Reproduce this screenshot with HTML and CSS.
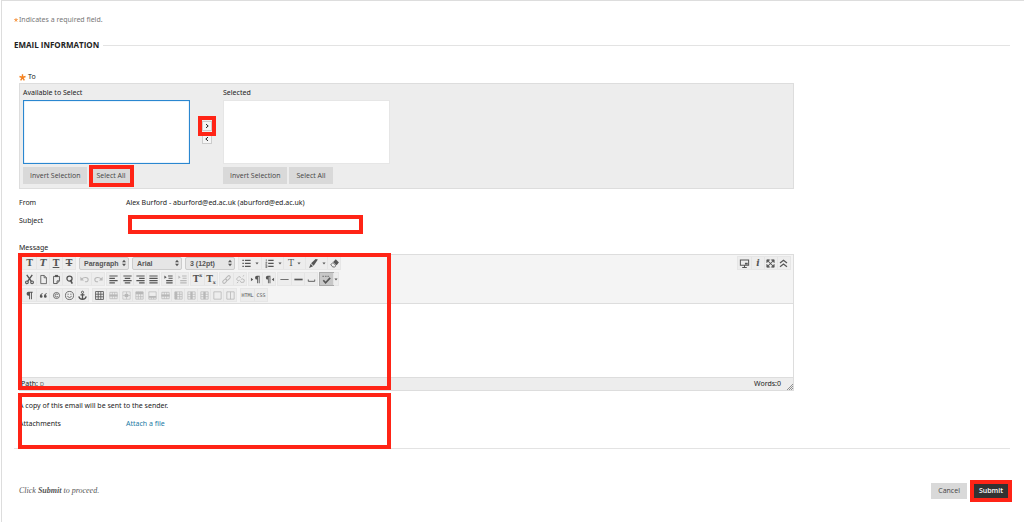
FILE: index.html
```html
<!DOCTYPE html>
<html lang="en">
<head>
    <meta charset="UTF-8">
    <meta name="viewport" content="width=device-width, initial-scale=1.0">
    <title>Send Email</title>
    <link rel="stylesheet" href="styles.css">
</head>
<body>
    <!-- Icon set, 12x12 grid -->
    <svg class="sprite" aria-hidden="true">
        <symbol id="star" viewBox="0 0 12 12"><path d="M6 .5v5.5M6 6L.8 4.3M6 6l5.2-1.7M6 6l-3.2 5M6 6l3.2 5" stroke="currentColor" stroke-width="2.4" fill="none"/></symbol>
        <symbol id="caret" viewBox="0 0 4 12"><path d="M.3 5h3.4L2 7.2z" fill="currentColor"/></symbol>
        <symbol id="updown" viewBox="0 0 6 12"><path d="M1 5.3h4L3 2.8zM1 6.7h4L3 9.2z" fill="currentColor"/></symbol>
        <symbol id="ul" viewBox="0 0 12 12"><path d="M1.5 2.5h1.6M1.5 5.8h1.6M1.5 9.1h1.6M4.3 2.5h6.2M4.3 5.8h6.2M4.3 9.1h6.2" stroke="currentColor" stroke-width="1.3"/></symbol>
        <symbol id="ol" viewBox="0 0 12 12"><path d="M2.5 1.4v2.4M1.6 4.8h1.6L1.8 6.8h1.6M1.6 8h1.6v2.4H1.6M1.6 9.2h1.4" fill="none" stroke="currentColor" stroke-width=".7"/><path d="M4.6 2.5h5.9M4.6 5.8h5.9M4.6 9.1h5.9" stroke="currentColor" stroke-width="1.3"/></symbol>
        <symbol id="brush" viewBox="0 0 12 12"><path d="M10.8 1.5L8.3 1 3.4 5.6l2.8 2.8zM2.9 6.4l2.6 2.6-4.3 1.9z" fill="currentColor"/></symbol>
        <symbol id="eraser" viewBox="0 0 12 12"><path d="M7.4 1.4L10.8 5 8.2 7.8 4.6 4.4z" fill="currentColor"/><path d="M4.2 4.9l3.5 3.4-1.6 1.5H4.2L1.9 7.5z" fill="none" stroke="currentColor" stroke-width=".9"/></symbol>
        <symbol id="cut" viewBox="0 0 12 12"><path d="M3 1l5 7M9 1L4 8" stroke="currentColor" stroke-width="1.5"/><circle cx="3.2" cy="9.1" r="1.5" fill="none" stroke="currentColor" stroke-width="1.2"/><circle cx="8.8" cy="9.1" r="1.5" fill="none" stroke="currentColor" stroke-width="1.2"/></symbol>
        <symbol id="page" viewBox="0 0 12 12"><path d="M3 1.6h3.8L9.2 4v6.5H3zM6.7 1.6v2.5h2.5" fill="none" stroke="currentColor" stroke-width=".9"/></symbol>
        <symbol id="paste" viewBox="0 0 12 12"><path d="M2.8 2.6h6.4v4.9l-2.6 2.9H2.8zM9.2 7.5H6.6v2.9" fill="none" stroke="currentColor"/><path d="M4.4 1h3.2v2.4H4.4z" fill="currentColor"/></symbol>
        <symbol id="find" viewBox="0 0 12 12"><circle cx="6" cy="5" r="2.8" fill="none" stroke="currentColor" stroke-width="1.4"/><path d="M7 6.5L9 10.5" stroke="currentColor" stroke-width="1.8"/></symbol>
        <symbol id="undo" viewBox="0 0 12 12"><path d="M3 5.5C5 3 10 3.2 10 6S8 8.5 6.5 8.5" fill="none" stroke="currentColor" stroke-width="1.2"/><path d="M1.5 3v4h4z" fill="currentColor"/></symbol>
        <symbol id="redo" viewBox="0 0 12 12"><path d="M9 5.5C7 3 2 3.2 2 6s2 2.5 3.5 2.5" fill="none" stroke="currentColor" stroke-width="1.2"/><path d="M10.5 3v4h-4z" fill="currentColor"/></symbol>
        <symbol id="left" viewBox="0 0 12 12"><path d="M1.5 2.2h9M1.5 4.7h6M1.5 7.2h9M1.5 9.7h6" stroke="currentColor" stroke-width="1.3"/></symbol>
        <symbol id="center" viewBox="0 0 12 12"><path d="M1.5 2.2h9M3 4.7h6M1.5 7.2h9M3 9.7h6" stroke="currentColor" stroke-width="1.3"/></symbol>
        <symbol id="right" viewBox="0 0 12 12"><path d="M1.5 2.2h9M4.5 4.7h6M1.5 7.2h9M4.5 9.7h6" stroke="currentColor" stroke-width="1.3"/></symbol>
        <symbol id="justify" viewBox="0 0 12 12"><path d="M1.5 2.2h9M1.5 4.7h9M1.5 7.2h9M1.5 9.7h9" stroke="currentColor" stroke-width="1.3"/></symbol>
        <symbol id="indent" viewBox="0 0 12 12"><path d="M5.5 2.2h5M6 4.7h4.5M3.5 7.2h7M3.5 9.7h7" stroke="currentColor" stroke-width="1.2"/><path d="M1.5 1.7v3.6L4 3.5z" fill="currentColor"/></symbol>
        <symbol id="link" viewBox="0 0 12 12"><g fill="none" stroke="currentColor" stroke-width="1.1" transform="rotate(-45 6 6)"><rect x=".8" y="4.5" width="5.2" height="3" rx="1.5"/><rect x="5.5" y="4.5" width="5.7" height="3" rx="1.5"/></g></symbol>
        <symbol id="unlink" viewBox="0 0 12 12"><path d="M6.5 4L4.3 2.6 1.6 5.5l1.8 2 1.8-.8M6.3 6.3l1.4-1.2 2.5 1.3-.6 2.6-3 .2-.8-1.5M2 9.8l1.5-1M8.5 2.5l1.5-1" fill="none" stroke="currentColor"/></symbol>
        <symbol id="ltr" viewBox="0 0 12 12"><path d="M1 4v4l2.5-2z" fill="currentColor"/><path d="M10.5 2h-3a2 2 0 000 4h.3v4h.9V3h.8v7h1z" fill="currentColor"/></symbol>
        <symbol id="rtl" viewBox="0 0 12 12"><path d="M11 4v4L8.5 6z" fill="currentColor"/><path d="M7 2H4a2 2 0 000 4h.3v4h.9V3H6v7h1z" fill="currentColor"/></symbol>
        <symbol id="thin" viewBox="0 0 12 12"><path d="M1.5 6h9" stroke="currentColor" stroke-width=".9"/></symbol>
        <symbol id="thick" viewBox="0 0 12 12"><path d="M1.5 6h9" stroke="currentColor" stroke-width="1.8"/></symbol>
        <symbol id="space" viewBox="0 0 12 12"><path d="M2.5 6v2h7V6" fill="none" stroke="currentColor"/></symbol>
        <symbol id="spell" viewBox="0 0 12 12"><path d="M2.5 6.8l2.5 2.7L10 4.3" fill="none" stroke="currentColor" stroke-width="1.8"/><path d="M1.5 2.5h1.8M4.3 2.5h1.8M7 2.5h1.8" stroke="currentColor" stroke-width="1.3" opacity=".6"/></symbol>
        <symbol id="pilcrow" viewBox="0 0 12 12"><path d="M9.5 2H5a2.2 2.2 0 000 4.4h.6V10h1V3h1v7h1V3h.9z" fill="currentColor"/></symbol>
        <symbol id="quote" viewBox="0 0 12 12"><path d="M5.3 3.5Q2 4 2 7a1.5 1.5 0 101.7-1.5Q4 4.5 5.3 4.2zM9.8 3.5Q6.5 4 6.5 7a1.5 1.5 0 101.7-1.5Q8.5 4.5 9.8 4.2z" fill="currentColor"/></symbol>
        <symbol id="copyright" viewBox="0 0 12 12"><circle cx="6" cy="6" r="3.3" fill="none" stroke="currentColor" stroke-width=".9"/><path d="M7.4 5a1.6 1.6 0 100 2" fill="none" stroke="currentColor" stroke-width=".9"/></symbol>
        <symbol id="smile" viewBox="0 0 12 12"><circle cx="6" cy="6" r="4.4" fill="none" stroke="currentColor" stroke-width=".9"/><path d="M3.6 6.8q2.4 3 4.8 0M4.5 4v1.3M7.5 4v1.3" fill="none" stroke="currentColor" stroke-width=".9"/></symbol>
        <symbol id="anchor" viewBox="0 0 12 12"><circle cx="6" cy="2.5" r="1.2" fill="none" stroke="currentColor"/><path d="M6 3.7V10M3.8 5.3h4.4M2 7q.5 3 4 3.2Q9.5 10 10 7" fill="none" stroke="currentColor" stroke-width="1.4"/></symbol>
        <symbol id="table" viewBox="0 0 12 12"><path d="M1.7 1.7h8.6v8.6H1.7zM1.7 4.6h8.6M1.7 7.4h8.6M4.6 1.7v8.6M7.4 1.7v8.6" fill="none" stroke="currentColor" stroke-width=".9"/></symbol>
        <symbol id="rows" viewBox="0 0 12 12"><path d="M2 2.5h8v7H2zM4.7 2.5v7M7.3 2.5v7" fill="none" stroke="currentColor" stroke-width=".8"/><path d="M1.5 4.8h9v2.4h-9z" fill="currentColor"/></symbol>
        <symbol id="cell" viewBox="0 0 12 12"><path d="M2 2h8v8H2zM2 6h8M6 2v8" fill="none" stroke="currentColor" stroke-width=".7"/><path d="M4 4.2h4v3.6H4z" fill="currentColor"/></symbol>
        <symbol id="rowtop" viewBox="0 0 12 12"><path d="M2 2h8v8H2zM2 7.3h8M4.7 2v8M7.3 2v8" fill="none" stroke="currentColor" stroke-width=".8"/><path d="M2 2h8v2.7H2z" fill="currentColor"/></symbol>
        <symbol id="rowbottom" viewBox="0 0 12 12"><path d="M2 2h8v8H2zM4.7 7v3M7.3 7v3" fill="none" stroke="currentColor" stroke-width=".8"/><path d="M2 6.5h8v2H2z" fill="currentColor"/></symbol>
        <symbol id="colleft" viewBox="0 0 12 12"><path d="M2 2h8v8H2zM2 4.7h8M2 7.3h8M7.3 2v8" fill="none" stroke="currentColor" stroke-width=".8"/><path d="M2 2h2.7v8H2z" fill="currentColor"/></symbol>
        <symbol id="colmid" viewBox="0 0 12 12"><path d="M2 2h8v8H2zM2 4.7h8M2 7.3h8" fill="none" stroke="currentColor" stroke-width=".8"/><path d="M4.7 2h2.6v8H4.7z" fill="currentColor"/></symbol>
        <symbol id="merge" viewBox="0 0 12 12"><path d="M2 2h8v8H2z" fill="none" stroke="currentColor" stroke-width=".9"/></symbol>
        <symbol id="split" viewBox="0 0 12 12"><path d="M2 2h8v8H2zM6 2v8" fill="none" stroke="currentColor" stroke-width=".9"/></symbol>
        <symbol id="monitor" viewBox="0 0 12 12"><path d="M1.5 2.2h9v5.8h-9zM3.5 10.3h5M6 8v2" fill="none" stroke="currentColor" stroke-width="1.1"/><path d="M6.5 5.2h3v2h-3z" fill="currentColor"/></symbol>
        <symbol id="expand" viewBox="0 0 12 12"><path d="M3 3l6 6M9 3L3 9" stroke="currentColor" stroke-width="1.1"/><path d="M2 2h3L2 5zM10 2v3L7 2zM2 10V7l3 3zM10 10H7l3-3z" fill="currentColor" stroke="currentColor" stroke-width=".8"/></symbol>
        <symbol id="collapse" viewBox="0 0 12 12"><path d="M2.2 5.5L6 2.5l3.8 3M2.2 9.5L6 6.5l3.8 3" fill="none" stroke="currentColor" stroke-width="1.4"/></symbol>
        <symbol id="next" viewBox="0 0 12 12"><path d="M4.5 3.2L7.8 6 4.5 8.8" fill="none" stroke="currentColor" stroke-width="1.5"/></symbol>
        <symbol id="prev" viewBox="0 0 12 12"><path d="M7.5 3.2L4.2 6l3.3 2.8" fill="none" stroke="currentColor" stroke-width="1.5"/></symbol>
    </svg>

    <form class="page">
        <p class="required-note"><svg><use href="#star"/></svg>Indicates a required field.</p>
        <h1 class="section-title">EMAIL INFORMATION</h1>

        <div class="fields">
            <div class="to-label"><svg><use href="#star"/></svg>To</div>
            <div class="picker">
                <div class="picker-list">
                    <label for="available">Available to Select</label>
                    <select id="available" class="active" multiple></select>
                    <div class="picker-buttons">
                        <button type="button">Invert Selection</button>
                        <span class="mark"><button type="button">Select All</button></span>
                    </div>
                </div>
                <div class="movers">
                    <span class="mark"><button type="button" aria-label="Add"><svg><use href="#next"/></svg></button></span>
                    <button type="button" aria-label="Remove"><svg><use href="#prev"/></svg></button>
                </div>
                <div class="picker-list">
                    <label for="selected">Selected</label>
                    <select id="selected" multiple></select>
                    <div class="picker-buttons">
                        <button type="button">Invert Selection</button>
                        <button type="button">Select All</button>
                    </div>
                </div>
            </div>

            <div class="row">
                <span class="row-label">From</span>
                <span>Alex Burford - aburford@ed.ac.uk (aburford@ed.ac.uk)</span>
            </div>
            <div class="row">
                <label class="row-label" for="subject">Subject</label>
                <span class="mark subject"><input type="text" id="subject"></span>
            </div>

            <label class="message-label" for="message">Message</label>
            <div class="editor mark-half">
                <div class="toolbar">
                    <div class="tools">
                        <div class="tool-row formats">
                            <div class="group letters">
                                <button type="button"><b>T</b></button>
                                <button type="button"><i>T</i></button>
                                <button type="button"><u>T</u></button>
                                <button type="button"><s>T</s></button>
                            </div>
                            <span class="drop"><select aria-label="Format"><option>Paragraph</option></select><svg><use href="#updown"/></svg></span>
                            <span class="drop"><select aria-label="Font"><option>Arial</option></select><svg><use href="#updown"/></svg></span>
                            <span class="drop"><select aria-label="Size"><option>3 (12pt)</option></select><svg><use href="#updown"/></svg></span>
                            <div class="group menus">
                                <button type="button" aria-label="Bullets"><svg><use href="#ul"/></svg><svg class="caret"><use href="#caret"/></svg></button>
                                <button type="button" aria-label="Numbering"><svg><use href="#ol"/></svg><svg class="caret"><use href="#caret"/></svg></button>
                                <button type="button" class="color">T<svg class="caret"><use href="#caret"/></svg></button>
                                <button type="button" aria-label="Highlight"><svg><use href="#brush"/></svg><svg class="caret"><use href="#caret"/></svg></button>
                                <button type="button" aria-label="Clear"><svg><use href="#eraser"/></svg></button>
                            </div>
                        </div>
                        <div class="tool-row">
                            <div class="group">
                                <button type="button" aria-label="Cut"><svg><use href="#cut"/></svg></button>
                                <button type="button" aria-label="Copy"><svg><use href="#page"/></svg></button>
                                <button type="button" aria-label="Paste"><svg><use href="#paste"/></svg></button>
                                <button type="button" aria-label="Find"><svg><use href="#find"/></svg></button>
                            </div>
                            <div class="group">
                                <button type="button" disabled aria-label="Undo"><svg><use href="#undo"/></svg></button>
                                <button type="button" disabled aria-label="Redo"><svg><use href="#redo"/></svg></button>
                            </div>
                            <div class="group">
                                <button type="button" aria-label="Align left"><svg><use href="#left"/></svg></button>
                                <button type="button" aria-label="Align center"><svg><use href="#center"/></svg></button>
                                <button type="button" aria-label="Align right"><svg><use href="#right"/></svg></button>
                                <button type="button" aria-label="Justify"><svg><use href="#justify"/></svg></button>
                            </div>
                            <div class="group">
                                <button type="button" aria-label="Indent"><svg><use href="#indent"/></svg></button>
                                <button type="button" disabled aria-label="Outdent"><svg><use href="#indent"/></svg></button>
                            </div>
                            <div class="group letters script">
                                <button type="button"><b>T</b><sup>x</sup></button>
                                <button type="button"><b>T</b><sub>x</sub></button>
                            </div>
                            <div class="group">
                                <button type="button" disabled aria-label="Link"><svg><use href="#link"/></svg></button>
                                <button type="button" disabled aria-label="Unlink"><svg><use href="#unlink"/></svg></button>
                            </div>
                            <div class="group">
                                <button type="button" aria-label="Left to right"><svg><use href="#ltr"/></svg></button>
                                <button type="button" aria-label="Right to left"><svg><use href="#rtl"/></svg></button>
                            </div>
                            <div class="group">
                                <button type="button" aria-label="Line"><svg><use href="#thin"/></svg></button>
                                <button type="button" aria-label="Rule"><svg><use href="#thick"/></svg></button>
                                <button type="button" aria-label="Space"><svg><use href="#space"/></svg></button>
                            </div>
                            <div class="group">
                                <button type="button" class="pressed" aria-label="Spelling"><svg><use href="#spell"/></svg></button>
                                <button type="button" class="narrow" aria-label="Languages"><svg class="caret"><use href="#caret"/></svg></button>
                            </div>
                        </div>
                        <div class="tool-row tables">
                            <div class="group">
                                <button type="button" aria-label="Paragraph marks"><svg><use href="#pilcrow"/></svg></button>
                                <button type="button" aria-label="Quote"><svg><use href="#quote"/></svg></button>
                                <button type="button" aria-label="Symbol"><svg><use href="#copyright"/></svg></button>
                                <button type="button" aria-label="Emoticon"><svg><use href="#smile"/></svg></button>
                                <button type="button" aria-label="Anchor"><svg><use href="#anchor"/></svg></button>
                            </div>
                            <div class="group">
                                <button type="button" aria-label="Table"><svg><use href="#table"/></svg></button>
                                <button type="button" disabled aria-label="Row properties"><svg><use href="#rows"/></svg></button>
                                <button type="button" disabled aria-label="Cell properties"><svg><use href="#cell"/></svg></button>
                                <button type="button" disabled aria-label="Row before"><svg><use href="#rowtop"/></svg></button>
                                <button type="button" disabled aria-label="Row after"><svg><use href="#rowbottom"/></svg></button>
                                <button type="button" disabled aria-label="Delete row"><svg><use href="#rows"/></svg></button>
                                <button type="button" disabled aria-label="Column before"><svg><use href="#colleft"/></svg></button>
                                <button type="button" disabled aria-label="Column after"><svg><use href="#colmid"/></svg></button>
                                <button type="button" disabled aria-label="Delete column"><svg><use href="#colmid"/></svg></button>
                                <button type="button" disabled aria-label="Merge cells"><svg><use href="#merge"/></svg></button>
                                <button type="button" disabled aria-label="Split cells"><svg><use href="#split"/></svg></button>
                            </div>
                            <div class="group code">
                                <button type="button">HTML</button>
                                <button type="button">CSS</button>
                            </div>
                        </div>
                    </div>
                    <div class="group">
                        <button type="button" aria-label="Preview"><svg><use href="#monitor"/></svg></button>
                        <button type="button" class="info"><i>i</i></button>
                        <button type="button" aria-label="Full screen"><svg><use href="#expand"/></svg></button>
                        <button type="button" aria-label="Collapse"><svg><use href="#collapse"/></svg></button>
                    </div>
                </div>
                <textarea id="message"></textarea>
                <div class="status">
                    <span>Path: <span class="path">p</span></span>
                    <span>Words:0</span>
                    <svg class="grip" viewBox="0 0 6 6"><path d="M0 6l6-6M2 6l4-4M4 6l2-2" stroke="#777" stroke-width=".8"/></svg>
                </div>
            </div>

            <div class="extras mark-half">
                <p>A copy of this email will be sent to the sender.</p>
                <div class="row">
                    <span class="row-label">Attachments</span>
                    <a href="#">Attach a file</a>
                </div>
            </div>
        </div>

        <div class="footer">
            <p>Click <b>Submit</b> to proceed.</p>
            <div class="actions">
                <button type="button">Cancel</button>
                <span class="mark"><button type="submit" class="submit">Submit</button></span>
            </div>
        </div>
    </form>
</body>
</html>
```
FILE: styles.css
```css
*, *::after {
    box-sizing: border-box;
    margin: 0;
    padding: 0;
}

body {
    background: white;
    color: #222;
    font-family: "Noto Sans", "Open Sans", sans-serif;
    font-size: 7px;
    line-height: 10px;
}

button, input, select, textarea {
    font: inherit;
    color: inherit;
    border: none;
    border-radius: 0;
    outline: none;
}

svg {
    display: block;
    width: 12px;
    height: 12px;
}

.sprite {
    display: none;
}

.page {
    min-height: 100vh;
    margin-left: 1px;
    padding: 14px 14px 20px 12px;
    border-top: 1px solid #ddd;
    border-left: 1px solid #ddd;
}

.required-note {
    display: flex;
    align-items: center;
    gap: 1px;
    color: #777;
}

.required-note svg {
    width: 4px;
    height: 4px;
    color: #f58220;
}

.section-title {
    display: flex;
    align-items: center;
    gap: 4px;
    margin-top: 15px;
    font: bold 8px/10px "Open Sans", sans-serif;
}

.section-title::after {
    content: "";
    flex: 1;
    border-top: 1px solid #e3e3e3;
}

.fields {
    padding: 22px 0 0 5px;
    border-bottom: 1px solid #e3e3e3;
}

.to-label {
    display: flex;
    align-items: center;
    gap: 2px;
    margin-bottom: 1px;
}

.to-label svg {
    width: 7px;
    height: 7px;
    color: #f58220;
}

/* Red callout frames */
.mark, .mark-half {
    position: relative;
    display: block;
}

.mark::after, .mark-half::after {
    content: "";
    position: absolute;
    inset: -3px;
    border: 4px solid #ff2416;
    pointer-events: none;
}

.mark-half::after {
    inset: -1px auto -1px -1px;
    width: 373px;
}

.editor.mark-half::after {
    inset: -2px auto 0 -2px;
}

.picker, .editor {
    width: calc(78% + 2px);
}

.picker {
    display: flex;
    margin-bottom: 9px;
    padding: 4px 3px;
    background: #ededed;
    border: 1px solid #ddd;
}

.picker-list {
    width: 167px;
}

.picker-list select {
    display: block;
    width: 100%;
    height: 64px;
    margin: 2px 0 3px;
    background: white;
    border: 1px solid #e6e6e6;
}

.picker-list .active {
    border-color: #2a87d0;
    box-shadow: inset 0 0 1px #2a87d0;
}

.picker-buttons {
    display: flex;
    gap: 2px;
}

.picker-buttons button, .actions button {
    display: block;
    height: 17px;
    padding: 0 7px;
    background: #d9d9d9;
    color: #444;
    font-family: "Open Sans", sans-serif;
}

.picker-buttons .mark::after {
    inset: -2px -1px -3px 0;
}

.movers {
    display: flex;
    flex-direction: column;
    align-items: center;
    gap: 3px;
    width: 33px;
    padding-top: 33px;
}

.movers button {
    display: block;
    width: 10px;
    height: 10px;
    background: #f5f5f5;
    border: 1px solid #ccc;
}

.movers svg {
    width: 8px;
    height: 8px;
}

.movers .mark::after {
    inset: -5px -4px -5px;
}

.row {
    display: flex;
    margin-top: 8px;
}

.row-label {
    width: 107px;
}

.subject {
    width: 229px;
    height: 13px;
    margin: 2px 0 0 5px;
}

.subject input {
    display: block;
    width: 100%;
    height: 13px;
}

.message-label {
    display: block;
    margin: 12px 0 1px;
}

.toolbar {
    display: flex;
    justify-content: space-between;
    align-items: flex-start;
    padding: 1px 2px;
    background: #f4f4f4;
    border-bottom: 1px solid #ddd;
}

.editor {
    border: 1px solid #ddd;
}

.tools {
    display: flex;
    flex-direction: column;
    gap: 2px;
}

.tool-row {
    display: flex;
    align-items: center;
    gap: 1px;
}

.formats, .tables {
    gap: 3px;
}

.group {
    display: flex;
    background: #ededed;
    border: 1px solid #e6e6e6;
    color: #555;
}

.group button {
    display: flex;
    align-items: center;
    justify-content: center;
    min-width: 13px;
    height: 12px;
    background: none;
}

.group button + button {
    border-left: 1px solid #e4e4e4;
}

.group svg {
    width: 11px;
    height: 11px;
    flex: none;
}

.group button:disabled {
    color: #b8b8b8;
}

.group svg.caret {
    width: 4px;
}

.group .narrow {
    min-width: 5px;
}

.group .pressed {
    background: #c8c8c8;
    box-shadow: 0 0 0 1px #aaa;
}

.letters, .group .color {
    font: bold 9px/12px "DejaVu Serif", serif;
}

.group .color {
    font-weight: normal;
}

.script button {
    width: 13px;
}

.script sup, .script sub {
    font-size: 5px;
    line-height: 5px;
}

.script sup {
    align-self: flex-start;
}

.script sub {
    align-self: flex-end;
}

.menus button {
    width: 22px;
    gap: 3px;
}

.menus button:last-child {
    width: 13px;
}

.drop {
    position: relative;
    width: 50px;
}

.drop select {
    display: block;
    appearance: none;
    width: 100%;
    height: 13px;
    padding: 0 4px;
    background: #e6e6e6;
    border: 1px solid #ccc;
    border-radius: 2px;
    font: bold 7px/11px "Liberation Sans", sans-serif;
    color: #555;
}

.drop svg {
    position: absolute;
    top: 0;
    right: 2px;
    width: 6px;
    color: #555;
    pointer-events: none;
}

.code {
    font: 5px/12px "DejaVu Sans Mono", monospace;
}

.info {
    font: bold 9px/12px "DejaVu Serif", serif;
}

.editor textarea {
    display: block;
    width: 100%;
    height: 73px;
    resize: none;
}

.status {
    display: flex;
    align-items: center;
    gap: 6px;
    height: 13px;
    padding-left: 1px;
    background: #ededed;
    border-top: 1px solid #ddd;
}

.status > :first-child {
    flex: 1;
}

.path {
    color: #777;
}

.grip {
    align-self: flex-end;
    width: 6px;
    height: 6px;
}

.extras {
    margin-top: 3px;
    padding: 7px 0 19px;
}

a {
    color: #1a7aa5;
    text-decoration: none;
}

.footer {
    display: flex;
    align-items: center;
    justify-content: space-between;
    margin-top: 34px;
    padding-left: 5px;
}

.footer p {
    font: italic 8px/10px "Liberation Serif", serif;
    color: #555;
}

.actions {
    display: flex;
    gap: 5px;
}

.actions button {
    height: 16px;
}

.actions .mark::after {
    inset: -3px -2px;
}

.actions .submit {
    background: #333;
    color: white;
    font-weight: 600;
}
```
